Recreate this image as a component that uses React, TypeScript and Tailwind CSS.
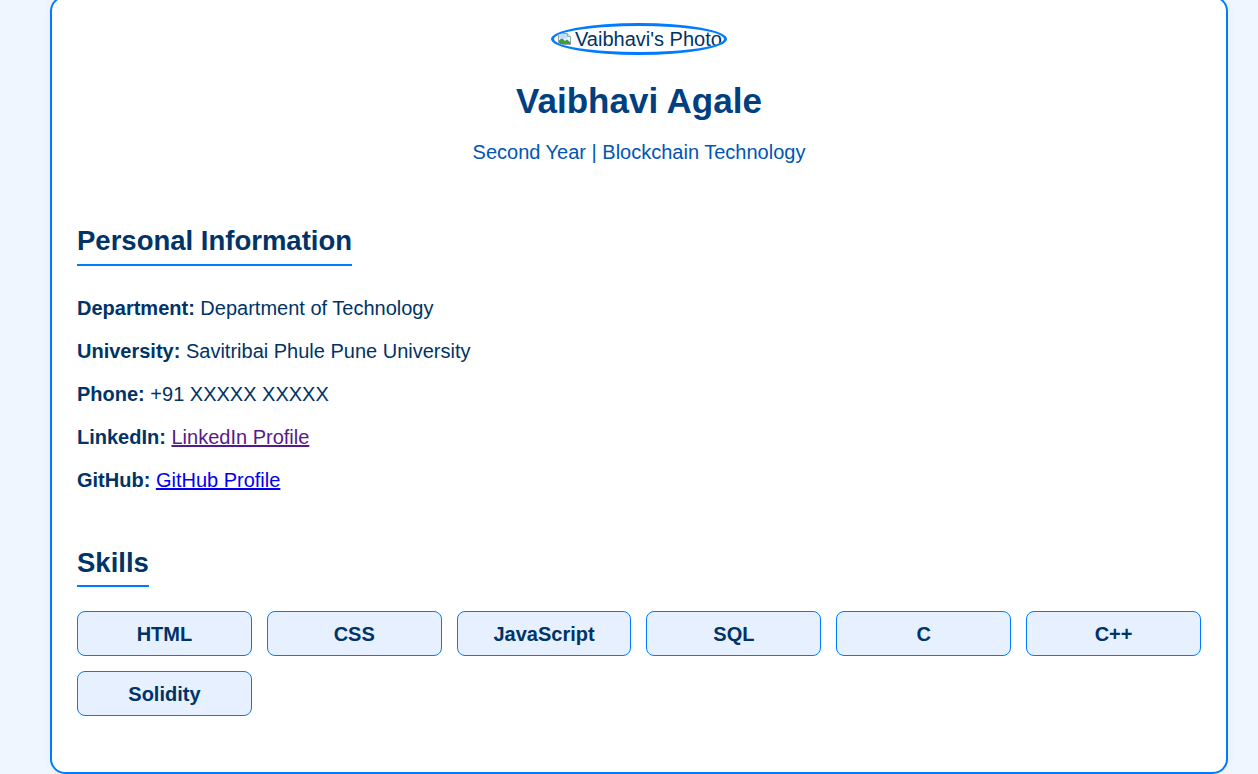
import React from "react";

const BrokenImg = () => (
  <svg width="16" height="16" viewBox="0 0 16 16" className="shrink-0">
    <path d="M1.5 2.5h9l3 3v8h-12z" fill="#f4f4f4" stroke="#9aa4ad" strokeWidth="1" />
    <path d="M2 9.5l3-2.5 3 3 2-1.5 3.5 3v1.5H2z" fill="#3f9b3f" />
    <rect x="2" y="3" width="8" height="4.5" fill="#bfe0f5" />
    <path d="M10.5 2.5v3h3" fill="#dfe3e6" stroke="#9aa4ad" strokeWidth="1" />
  </svg>
);

const rows: { label: string; value: string; link?: string }[] = [
  { label: "Department:", value: "Department of Technology" },
  { label: "University:", value: "Savitribai Phule Pune University" },
  { label: "Phone:", value: "+91 XXXXX XXXXX" },
  { label: "LinkedIn:", value: "LinkedIn Profile", link: "visited" },
  { label: "GitHub:", value: "GitHub Profile", link: "new" },
];

const skills = ["HTML", "CSS", "JavaScript", "SQL", "C", "C++", "Solidity"];

export default function App() {
  return (
    <div
      className="min-h-[774px] w-full overflow-hidden bg-[#f0f6ff]"
      style={{ fontFamily: '"Liberation Sans", Arial, sans-serif' }}
    >
      <div className="-mt-[4px] ml-[50px] flex h-[778px] w-[1178px] flex-col rounded-[15px] border-2 border-[#007bff] bg-white px-[25px] pt-[25px] text-[#003366] shadow-[0_0_10px_rgba(0,0,0,0.05)]">
        <div className="flex flex-col items-center">
          <span className="flex h-[32px] w-[176px] items-center overflow-hidden whitespace-nowrap rounded-[50%] border-[3px] border-[#007bff] pl-[3px] text-[20px] leading-[23px] text-[#003366]">
            <BrokenImg />
            <span className="ml-[2px]">Vaibhavi's Photo</span>
          </span>
          <h1 className="mt-[26px] text-[35px] font-bold leading-[40px] text-[#004080]">Vaibhavi Agale</h1>
          <p className="mt-[20px] text-[20px] leading-[23px] text-[#0056b3]">Second Year | Blockchain Technology</p>
        </div>

        <div className="mt-[61px]">
          <h2 className="inline-block border-b-2 border-[#007bff] pb-[7px] text-[27.5px] font-bold leading-[32px] text-[#003366]">
            Personal Information
          </h2>
          <div className="mt-[31px] flex flex-col gap-[20px]">
            {rows.map((r) => (
              <p key={r.label} className="text-[20px] leading-[23px] text-[#003366]">
                <strong className="font-bold">{r.label}</strong>{" "}
                {r.link ? (
                  <a href="#" className={r.link === "visited" ? "text-[#551a8b] underline" : "text-[#0000ee] underline"}>
                    {r.value}
                  </a>
                ) : (
                  r.value
                )}
              </p>
            ))}
          </div>
        </div>

        <div className="mt-[55px]">
          <h2 className="inline-block border-b-2 border-[#007bff] pb-[6px] text-[27.5px] font-bold leading-[32px] text-[#003366]">
            Skills
          </h2>
          <div className="mt-[24px] grid grid-cols-6 gap-[15px]">
            {skills.map((s) => (
              <div
                key={s}
                className="flex h-[45px] items-center justify-center rounded-[8px] border border-[#007bff] bg-[#e6f0ff] text-[20px] font-bold text-[#003366]"
              >
                {s}
              </div>
            ))}
          </div>
        </div>
      </div>
    </div>
  );
}
